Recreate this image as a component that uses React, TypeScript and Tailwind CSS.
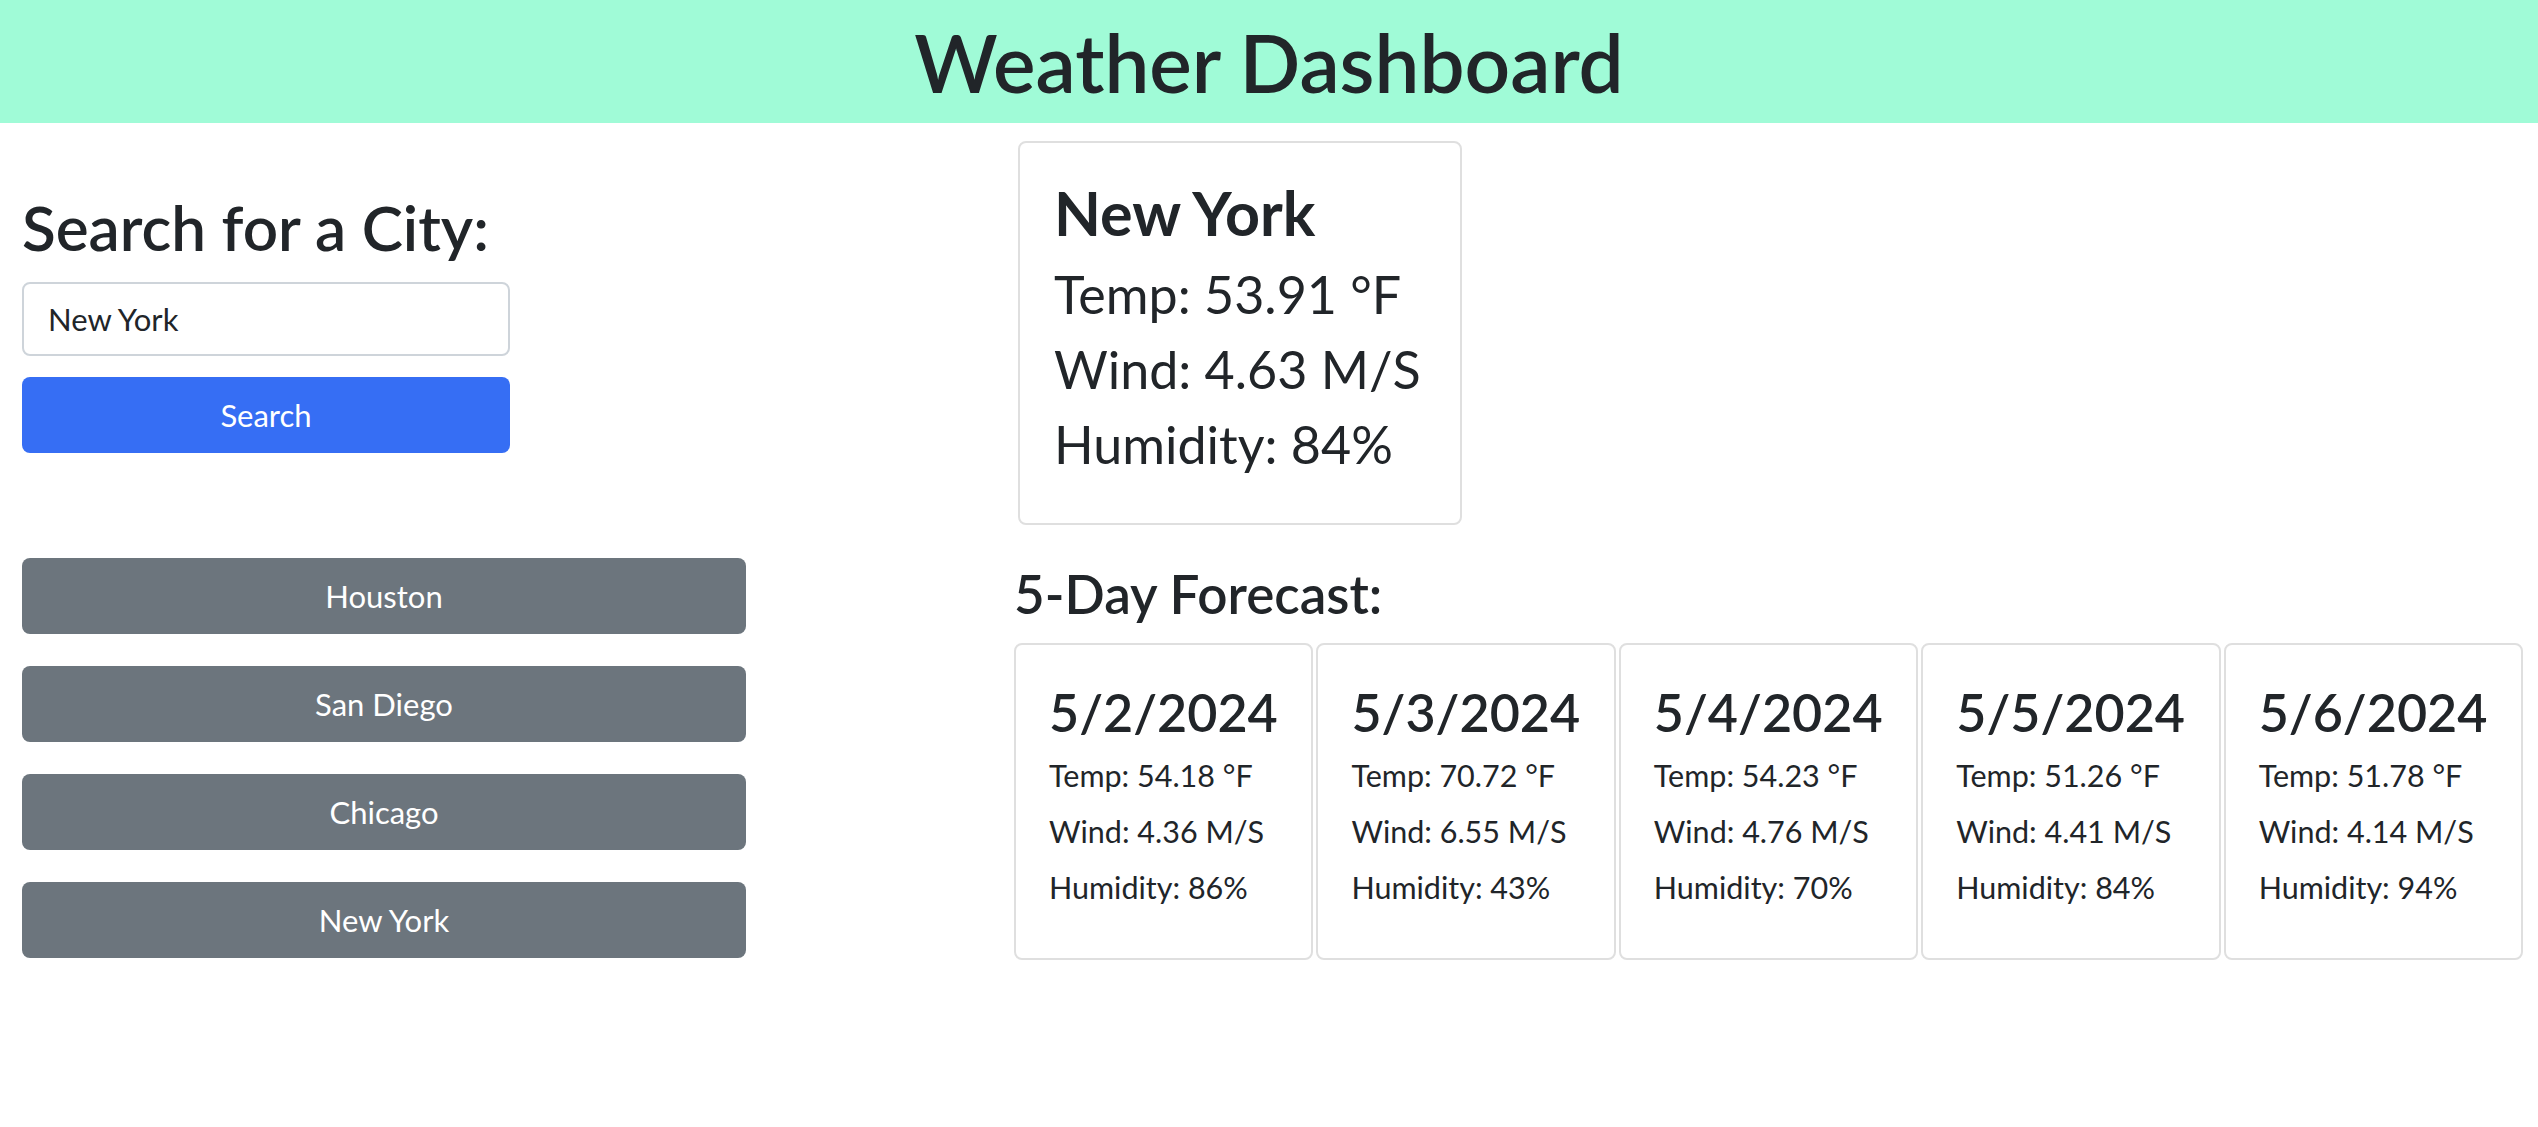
import React from "react";

const forecast = [
  { d: "5/2/2024", t: "54.18", w: "4.36", h: "86" },
  { d: "5/3/2024", t: "70.72", w: "6.55", h: "43" },
  { d: "5/4/2024", t: "54.23", w: "4.76", h: "70" },
  { d: "5/5/2024", t: "51.26", w: "4.41", h: "84" },
  { d: "5/6/2024", t: "51.78", w: "4.14", h: "94" },
];

export default function App() {
  return (
    <div className="min-h-screen bg-white text-[#212529] font-['Lato',sans-serif]">
      <header className="h-[123px] bg-[#a0fbd7] flex items-center justify-center">
        <h1 className="text-[80px] leading-none font-semibold">Weather Dashboard</h1>
      </header>
      <div className="flex">
        <aside className="w-[746px] shrink-0 pl-[22px] pt-[66px] flex flex-col">
          <h2 className="text-[62px] leading-[77px] font-semibold">Search for a City:</h2>
          <input
            readOnly
            value="New York"
            className="mt-[16px] w-[488px] h-[74px] rounded-[8px] border-2 border-[#ced4da] px-[24px] text-[31px] text-[#212529] outline-none"
          />
          <button className="mt-[21px] w-[488px] h-[76px] rounded-[8px] bg-[#366ef4] text-white text-[31px]">
            Search
          </button>
          <div className="mt-[105px] flex flex-col gap-[32px]">
            {["Houston", "San Diego", "Chicago", "New York"].map((c) => (
              <button key={c} className="w-[724px] h-[76px] rounded-[8px] bg-[#6c757d] text-white text-[31px]">
                {c}
              </button>
            ))}
          </div>
        </aside>
        <main className="flex-1 min-w-0 pl-[268px] pr-[15px] pt-[18px]">
          <div className="ml-[4px] w-[444px] h-[384px] rounded-[8px] border-2 border-[#dfdfdf] px-[34px] pt-[26px]">
            <div className="text-[61px] leading-[88px] font-bold">New York</div>
            <div className="text-[52px] leading-[75px]">Temp: 53.91 °F</div>
            <div className="text-[52px] leading-[75px]">Wind: 4.63 M/S</div>
            <div className="text-[52px] leading-[75px]">Humidity: 84%</div>
          </div>
          <h3 className="mt-[35px] text-[53px] leading-[68px] font-semibold">5-Day Forecast:</h3>
          <div className="mt-[15px] flex gap-[3px]">
            {forecast.map((f) => (
              <div
                key={f.d}
                className="flex-1 basis-0 min-w-0 h-[317px] rounded-[8px] border-2 border-[#dfdfdf] pl-[33px] pt-[33px] whitespace-nowrap"
              >
                <div className="text-[52px] leading-[69px] font-semibold">{f.d}</div>
                <div className="text-[30.5px] leading-[56px]">Temp: {f.t} °F</div>
                <div className="text-[30.5px] leading-[56px]">Wind: {f.w} M/S</div>
                <div className="text-[30.5px] leading-[56px]">Humidity: {f.h}%</div>
              </div>
            ))}
          </div>
        </main>
      </div>
    </div>
  );
}
